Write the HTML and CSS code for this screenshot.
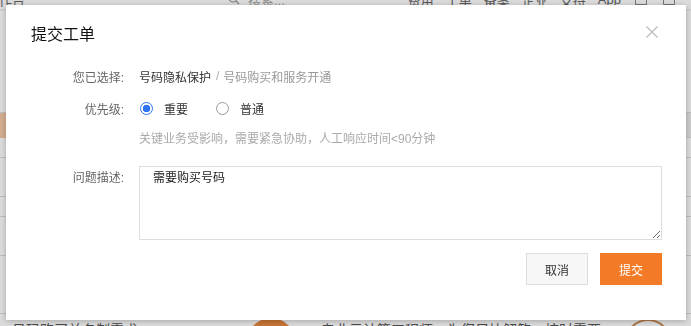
FILE: index.html
```html
<!DOCTYPE html>
<html lang="zh-CN">
<head>
    <meta charset="UTF-8">
    <title>提交工单</title>
    <link rel="stylesheet" href="styles.css">
</head>
<body>
    <!-- page behind the dialog -->
    <div class="page">
        <header class="topbar">
            <span class="brand">工作台</span>
            <span class="search">
                <svg width="12" height="12" viewBox="0 0 12 12"><circle cx="5" cy="5" r="4" fill="none" stroke="#999" stroke-width="1.2"/><path d="M8 8l3 3" stroke="#999" stroke-width="1.2"/></svg>
                搜索...
            </span>
            <nav class="nav">
                <span>费用</span>
                <span>工单</span>
                <span>备案</span>
                <span>企业</span>
                <span>支持</span>
                <span>App</span>
                <span class="nav-icon"></span>
                <span class="nav-icon bell"></span>
            </nav>
        </header>
        <div class="list">
            <div class="row tall"></div>
            <div class="row active"><span class="mark"></span></div>
            <div class="row short"></div>
            <div class="row mid"></div>
            <div class="row short"></div>
            <div class="row mid"></div>
            <div class="row filler"></div>
            <div class="row promo">
                <span class="promo-title">号码购买关名制需求</span>
                <span class="promo-badge"></span>
                <span class="promo-text">专业云计算工程师，为您尽快解答，按时需要</span>
                <span class="promo-ring"></span>
            </div>
        </div>
    </div>
    <div class="mask"></div>

    <div class="dialog">
        <div class="dialog-head">
            <h3>提交工单</h3>
            <span class="close">
                <svg width="12" height="12" viewBox="0 0 12 12"><path d="M0.5 0.5l11 11M11.5 0.5l-11 11" stroke="#bbb" stroke-width="1.2"/></svg>
            </span>
        </div>

        <div class="form">
            <div class="form-row">
                <label class="form-label">您已选择:</label>
                <div class="form-field">
                    <span class="crumb">号码隐私保护</span>
                    <span class="crumb-sep">/</span>
                    <span class="crumb-sub">号码购买和服务开通</span>
                </div>
            </div>
            <div class="form-row">
                <label class="form-label">优先级:</label>
                <div class="form-field radios">
                    <span class="radio checked"></span><span class="radio-text">重要</span>
                    <span class="radio"></span><span class="radio-text">普通</span>
                </div>
            </div>
            <div class="form-row hint-row">
                <div class="form-label"></div>
                <div class="form-field hint">关键业务受影响，需要紧急协助，人工响应时间&lt;90分钟</div>
            </div>
            <div class="form-row desc-row">
                <label class="form-label">问题描述:</label>
                <div class="form-field">
                    <textarea class="desc">需要购买号码</textarea>
                </div>
            </div>
        </div>

        <div class="footer">
            <button class="btn">取消</button>
            <button class="btn primary">提交</button>
        </div>
    </div>
</body>
</html>
```

FILE: styles.css
```css
* {
    box-sizing: border-box;
}
body {
    margin: 0;
    font-family: 'Liberation Sans', 'Noto Sans CJK SC', sans-serif;
    font-size: 12px;
    color: #333;
    background-color: #f2f2f2;
    overflow: hidden;
}

/* background page */
.page {
    height: 326px;
    overflow: hidden;
}
.topbar {
    display: flex;
    align-items: center;
    height: 20px;
    margin-top: -11px;
    background-color: #fff;
    font-size: 13px;
    color: #666;
}
.brand {
    margin-left: -14px;
    width: 250px;
}
.search {
    display: flex;
    align-items: center;
    gap: 8px;
    margin-left: -8px;
    color: #aaa;
}
.nav {
    display: flex;
    align-items: center;
    gap: 12px;
    margin-left: auto;
    margin-right: 16px;
}
.nav-icon {
    width: 12px;
    height: 12px;
    border: 1px solid #888;
    margin-left: 2px;
}
.nav-icon.bell {
    border-radius: 5px 5px 0 0;
    margin-left: 4px;
}
.list {
    background-color: #fff;
    margin-top: 2px;
}
.row {
    border-bottom: 1px solid #ddd;
    display: flex;
    align-items: center;
}
.row.tall {
    height: 102px;
}
.row.active {
    height: 25px;
    background-color: #eee;
}
.mark {
    width: 8px;
    height: 25px;
    background-color: #f6c9a6;
}
.row.short {
    height: 20px;
}
.row.mid {
    height: 39px;
}
.row.filler {
    height: 58px;
}
.promo {
    height: 22px;
    border-bottom: none;
    font-size: 14px;
    color: #555;
}
.promo-title {
    margin-left: 12px;
    width: 235px;
    margin-top: 8px;
}
.promo-badge {
    width: 48px;
    height: 48px;
    border-radius: 50%;
    border: 8px solid #e8873f;
    margin-top: 34px;
}
.promo-text {
    margin-left: 26px;
    width: 300px;
    margin-top: 8px;
}
.promo-ring {
    width: 46px;
    height: 46px;
    border-radius: 50%;
    border: 2px solid #c98a55;
    margin-left: 4px;
    margin-top: 34px;
}
.mask {
    position: fixed;
    inset: 0;
    background-color: rgba(0, 0, 0, 0.14);
}

/* dialog */
.dialog {
    position: fixed;
    left: 6px;
    top: 5px;
    width: 680px;
    height: 315px;
    background-color: #fff;
    box-shadow: 0 1px 6px rgba(0, 0, 0, 0.25);
    padding: 16px 24px 0 0;
}
.dialog-head {
    display: flex;
    justify-content: space-between;
    align-items: center;
    padding-left: 25px;
    height: 24px;
}
.dialog-head h3 {
    margin: 0;
    font-size: 16px;
    font-weight: normal;
    color: #111;
}
.close {
    display: flex;
    margin-right: 4px;
    margin-top: -2px;
}
.form {
    margin-top: 22px;
}
.form-row {
    display: flex;
    align-items: center;
    min-height: 18px;
}
.form-row + .form-row {
    margin-top: 14px;
}
.form-row.hint-row {
    margin-top: 11px;
}
.form-row.desc-row {
    align-items: flex-start;
    margin-top: 20px;
}
.form-label {
    width: 118px;
    text-align: right;
    color: #666;
    flex: none;
}
.desc-row .form-label {
    margin-top: 2px;
}
.form-field {
    margin-left: 15px;
    flex: 1;
    display: flex;
    align-items: center;
}
.crumb {
    color: #333;
}
.crumb-sep {
    color: #aaa;
    margin: 0 4px 0 5px;
}
.crumb-sub {
    color: #999;
}
.radio {
    width: 13px;
    height: 13px;
    border-radius: 50%;
    border: 1px solid #999;
    margin-left: 1px;
    flex: none;
}
.radio.checked {
    border: 1.5px solid #2f74f5;
    background: radial-gradient(circle, #2f74f5 0 3.5px, #fff 4px);
}
.radio-text {
    margin-left: 11px;
    margin-right: 27px;
    color: #333;
}
.hint {
    color: #aaa;
}
.desc {
    display: block;
    width: 523px;
    height: 74px;
    border: 1px solid #ddd;
    padding: 3px 13px;
    font-family: inherit;
    font-size: 12px;
    line-height: 16px;
    color: #222;
    resize: vertical;
}
.footer {
    display: flex;
    justify-content: flex-end;
    gap: 12px;
    margin-top: 13px;
}
.btn {
    width: 62px;
    height: 32px;
    border: 1px solid #ddd;
    background-color: #f7f7f7;
    font-family: inherit;
    font-size: 12px;
    color: #333;
    padding: 0;
}
.btn.primary {
    background-color: #f37a27;
    border-color: #f37a27;
    color: #fff;
}
```
